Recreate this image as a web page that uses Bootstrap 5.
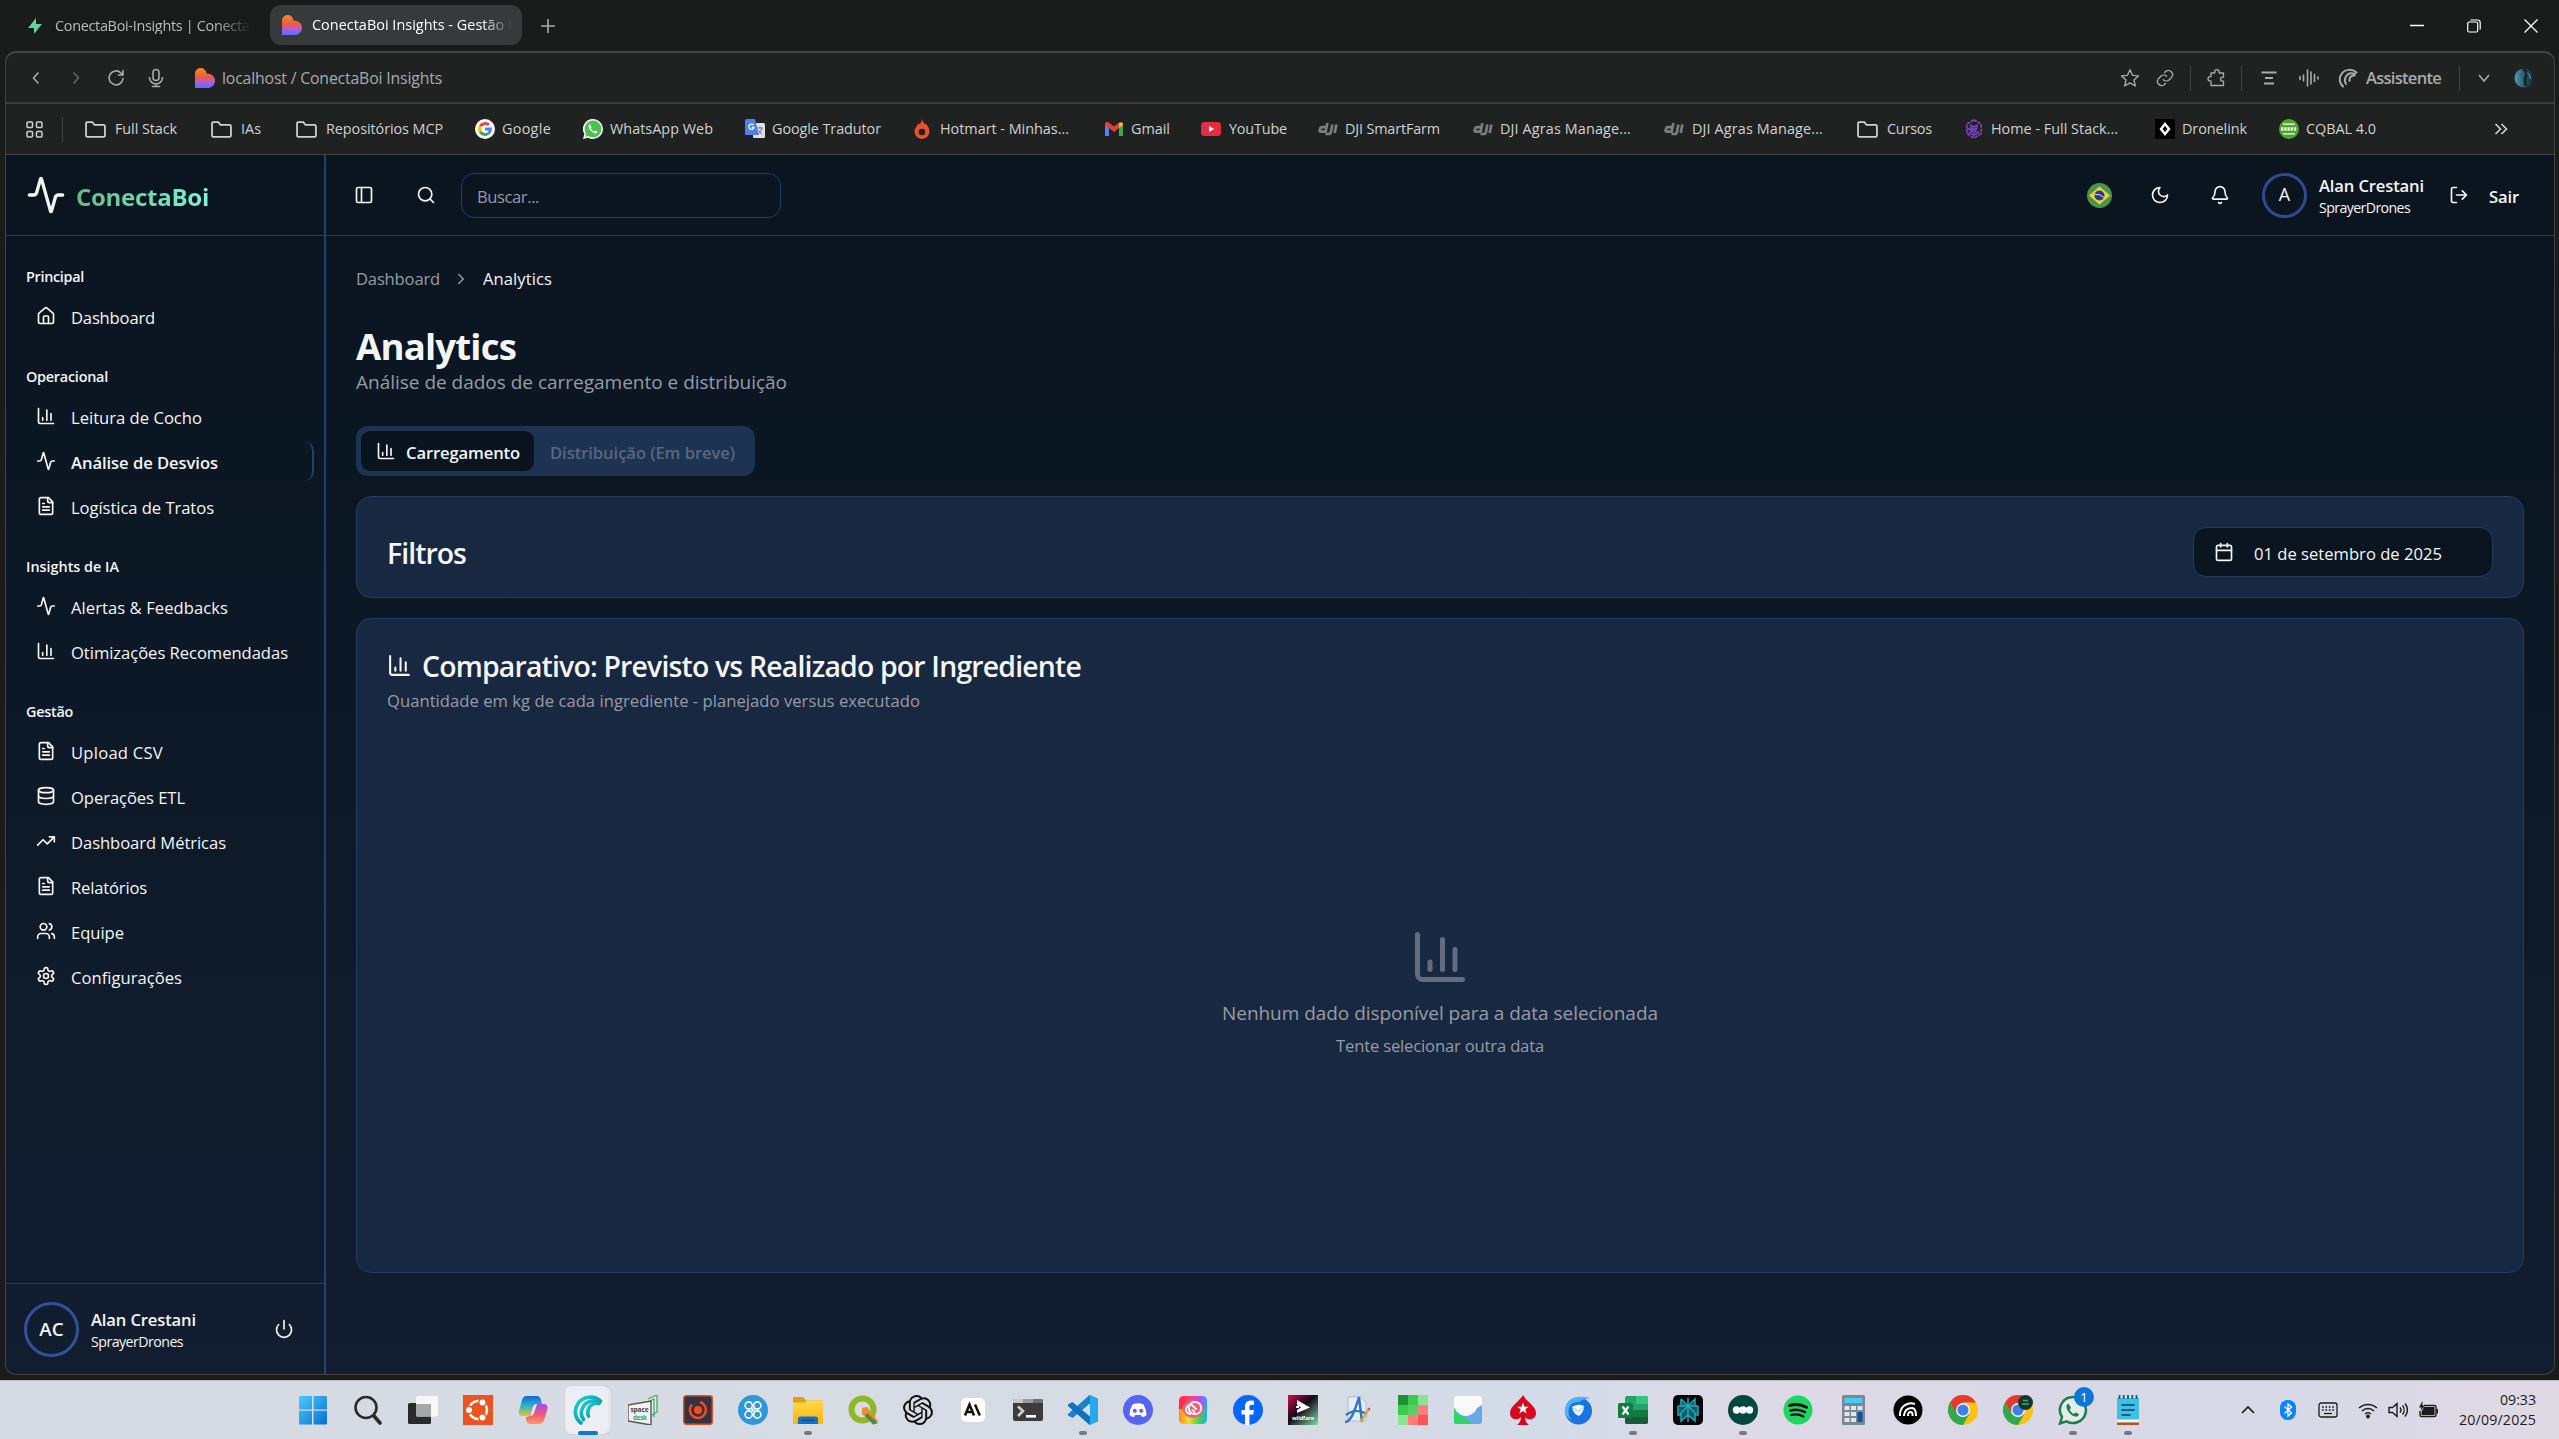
<!DOCTYPE html>
<html lang="pt-BR">
<head>
<meta charset="utf-8">
<meta name="viewport" content="width=device-width, initial-scale=1">
<title>ConectaBoi Insights</title>
<link href="https://cdn.jsdelivr.net/npm/bootstrap@5.3.0/dist/css/bootstrap.min.css" rel="stylesheet">
<style>
:root{--line:#233c66;--fg:#f3f5f7;--muted:#969ca6;--cardbg:#192841}
html,body{height:100%;overflow:hidden}
body{background:#1a1c1b;color:var(--fg);font-family:"Open Sans","Noto Sans",sans-serif;font-size:16.5px;line-height:1.2}
svg{display:block;flex:none}
.lu{fill:none;stroke:currentColor;stroke-width:2;stroke-linecap:round;stroke-linejoin:round;width:20px;height:20px}
.thin{stroke-width:1.6}
.t{display:inline-block;white-space:nowrap;flex:none}
a{color:inherit;text-decoration:none}
.t14{font-size:16.6px}.t12{font-size:14.2px}.sb{font-weight:600}
.screen{height:1439px;width:2559px}
.tabstrip{height:51px;color:#b9bbba;font-size:14.4px}
.tab-idle{width:270px;padding-left:26px;gap:11px}
.tab-idle .clip{width:196px;overflow:hidden;-webkit-mask-image:linear-gradient(90deg,#000 82%,transparent)}
.tab-on{width:252px;height:40px;margin-top:5px;align-self:flex-start;border-radius:11px;background:#373a3b;color:#fff;padding-left:12px;gap:10px}
.tab-on .clip{width:200px;overflow:hidden;-webkit-mask-image:linear-gradient(90deg,#000 85%,transparent)}
.winbtns{padding-right:21px;gap:43px;color:#fff}
.frame{margin:0 4px 0 5px;height:1324px;border:1px solid #414443;border-top-width:2px;border-radius:11px;overflow:hidden;background:#202221}
.toolbar{height:49px;border:0;color:#a9abaa;padding-top:1px}
.toolbar .nav-ic{padding-left:20px;gap:20px}
.addr{font-size:15.8px;margin-left:6px}
.toolright{padding-right:20px}
.vsep{width:1px;height:25px;background:#414443}
.bookbar{height:53px;border-top:2px solid #3a3d3c;border-bottom:1px solid #414443;color:#cfd1d0;font-size:14.4px}
.app{height:1219px;background:linear-gradient(180deg,#0b1520 0,#0c1724 30%,#121e30 100%)}
.side{width:320px;border-right:2px solid #23406f}
.brand{height:81px;border-bottom:1px solid var(--line);padding-left:20px;gap:10px}
.brandname{font-weight:700;font-size:24px;background:linear-gradient(90deg,#66b987,#7bf6d8);-webkit-background-clip:text;background-clip:text;color:transparent;padding-top:4px}
.sidegroup{padding:0 10px;margin-top:20px}
.sidelabel{height:40px;padding:2px 0 0 10px;font-weight:600;font-size:14.4px}
.sideitem{height:40px;padding-left:20px;gap:15px;margin-bottom:5px;border-radius:10px;color:#f3f5f7}
.sideitem:last-child{margin-bottom:0}
.sideitem .t{padding-top:3px}
.sideitem.on{font-weight:600;border-right:2px solid #23406f}
.sidefoot{height:91px;border-top:1px solid var(--line);padding:0 30px 0 18px}
.ava{border:3px solid #35509a;border-radius:50%}
.ava-lg{width:55px;height:55px;font-size:18.8px}
.ava-sm{width:45px;height:45px;margin:0 12px 0 32px;font-size:18px;border-color:#31498f}
.who{gap:3px;padding-top:2px}
.hdr{height:81px;border-bottom:1px solid var(--line);background:#0b1520;padding:0 35px 0 28px}
.search{width:320px;height:45px;border:1px solid var(--line);border-radius:13px;color:#949ba6;padding-left:15px}
.content{padding:0 30px}
.muted{color:var(--muted)}
.crumb{height:22px;margin-top:32px;font-size:16.6px;gap:12px}
h1.pg{font-size:36.6px;font-weight:700;margin:31px 0 0;line-height:50px}
.sub{font-size:19px;line-height:28px;margin-top:-3px}
.seg{width:399px;height:50px;background:#1e3252;border-radius:12px;padding:5px;margin-top:30px}
.seg-on{width:173px;height:40px;background:#0a141f;border-radius:9px;padding-left:15px;gap:10px}
.seg-off{margin-left:16px;color:#586680}
.panel{background:var(--cardbg);border:1px solid var(--line);border-radius:15px;margin-top:20px}
.p1{height:102px;padding:30px 30px 0}
.p2{height:655px;padding:29px 30px}
.h24{font-size:28.4px;font-weight:600}
.datebtn{width:300px;height:50px;background:#0b1520;border:1px solid var(--line);border-radius:13px;padding-left:20px;gap:20px;color:#f3f5f7}
.bar{margin-top:5px;height:59px;background:linear-gradient(90deg,#d6dae3 0,#d7dbe3 50%,#d3dbe8 60%,#ddd9e6 68%,#d8d8e6 90%,#e0d9e4 100%);border-top:1px solid #b9bac0;padding-left:285px;color:#1b1b1b}
.slot{width:55px;height:58px;position:relative;display:flex;align-items:center;justify-content:center}
.slot svg{width:30px;height:30px;z-index:1}
.slot.run::after{content:"";position:absolute;bottom:4px;width:8px;height:4px;border-radius:2px;background:#77797d}
.slot.act::after{content:"";position:absolute;bottom:4px;width:20px;height:4px;border-radius:2px;background:#0a78d4}
.slot.act::before{content:"";position:absolute;left:5px;top:5px;width:43px;height:48px;border-radius:6px;background:#eceef3;box-shadow:4px 0 0 -1px #e4e6ec,4px 0 0 0 #cbced6,0 0 0 1px #d0d3da}
.tray{padding-right:23px}
.clock{margin-left:21px;gap:2px;padding-bottom:1px}
.cnt{position:absolute;z-index:2;left:29px;top:6px;width:20px;height:20px;border-radius:50%;background:#0a78d4;color:#fff;font-size:13px;line-height:20px;text-align:center}
</style>
<script src="https://cdn.jsdelivr.net/npm/bootstrap@5.3.0/dist/js/bootstrap.bundle.min.js"></script>
</head>
<body>
<svg width="0" height="0" class="position-absolute">
<defs>
<linearGradient id="gh" x1="0" y1="0" x2="0" y2="1"><stop offset="0" stop-color="#f08a2c"/><stop offset=".45" stop-color="#ee5b3c"/><stop offset=".7" stop-color="#b45cd8"/><stop offset="1" stop-color="#4b73ff"/></linearGradient>
<linearGradient id="gw" x1="0" y1="0" x2="1" y2="1"><stop offset="0" stop-color="#4cc9fb"/><stop offset="1" stop-color="#0670d0"/></linearGradient>
<linearGradient id="gcm" x1="0" y1="0" x2="1" y2="1"><stop offset="0" stop-color="#19d3d6"/><stop offset="1" stop-color="#0a7f96"/></linearGradient>
<linearGradient id="gc1" x1="0" y1="0" x2="0" y2="1"><stop offset="0" stop-color="#1565d8"/><stop offset=".5" stop-color="#2db5c8"/><stop offset="1" stop-color="#e6c52a"/></linearGradient>
<linearGradient id="gc2" x1="0" y1="0" x2="0" y2="1"><stop offset="0" stop-color="#a64df0"/><stop offset=".5" stop-color="#f0567a"/><stop offset="1" stop-color="#ff9a62"/></linearGradient>
<linearGradient id="gcc" x1="0" y1="0" x2="1" y2="0"><stop offset="0" stop-color="#ff2d2d"/><stop offset=".45" stop-color="#ff3d8a"/><stop offset=".75" stop-color="#c04bf0"/><stop offset="1" stop-color="#2f9bff"/></linearGradient>
<linearGradient id="gcd" x1="0" y1="0" x2="1" y2="0"><stop offset="0" stop-color="#ff8a1e"/><stop offset=".35" stop-color="#f5dc22"/><stop offset=".7" stop-color="#4bcf4e"/><stop offset="1" stop-color="#20b6d8"/></linearGradient>
<linearGradient id="gap" x1="0" y1="0" x2="1" y2="1"><stop offset="0" stop-color="#d01050"/><stop offset=".45" stop-color="#150814"/><stop offset="1" stop-color="#7fe0a8"/></linearGradient>
<linearGradient id="gfo" x1="0" y1="0" x2="0" y2="1"><stop offset="0" stop-color="#ffd94f"/><stop offset="1" stop-color="#fbb40e"/></linearGradient>
<linearGradient id="gball" x1="0" y1="0" x2="1" y2="0"><stop offset="0" stop-color="#4f9db5"/><stop offset=".45" stop-color="#2f5f73"/><stop offset="1" stop-color="#16262f"/></linearGradient>
</defs>
<symbol id="activity" viewBox="0 0 24 24"><path d="M22 12h-2.48a2 2 0 0 0-1.93 1.46l-2.35 8.36a.25.25 0 0 1-.48 0L9.24 2.18a.25.25 0 0 0-.48 0l-2.35 8.36A2 2 0 0 1 4.49 12H2"/></symbol>
<symbol id="house" viewBox="0 0 24 24"><path d="M15 21v-8a1 1 0 0 0-1-1h-4a1 1 0 0 0-1 1v8"/><path d="M3 10a2 2 0 0 1 .709-1.528l7-5.999a2 2 0 0 1 2.582 0l7 5.999A2 2 0 0 1 21 10v9a2 2 0 0 1-2 2H5a2 2 0 0 1-2-2z"/></symbol>
<symbol id="chart" viewBox="0 0 24 24"><path d="M3 3v16a2 2 0 0 0 2 2h16M18 17V9M13 17V5M8 17v-3"/></symbol>
<symbol id="file" viewBox="0 0 24 24"><path d="M15 2H6a2 2 0 0 0-2 2v16a2 2 0 0 0 2 2h12a2 2 0 0 0 2-2V7Z"/><path d="M14 2v4a2 2 0 0 0 2 2h4M10 9H8M16 13H8M16 17H8"/></symbol>
<symbol id="database" viewBox="0 0 24 24"><ellipse cx="12" cy="5" rx="9" ry="3"/><path d="M3 5v14a9 3 0 0 0 18 0V5"/><path d="M3 12a9 3 0 0 0 18 0"/></symbol>
<symbol id="trend" viewBox="0 0 24 24"><path d="m22 7-8.500 8.500-5-5L2 17M16 7h6v6"/></symbol>
<symbol id="users" viewBox="0 0 24 24"><path d="M16 21v-2a4 4 0 0 0-4-4H6a4 4 0 0 0-4 4v2"/><circle cx="9" cy="7" r="4"/><path d="M22 21v-2a4 4 0 0 0-3-3.870M16 3.130a4 4 0 0 1 0 7.750"/></symbol>
<symbol id="gear" viewBox="0 0 24 24"><path d="M12.220 2h-.44a2 2 0 0 0-2 2v.18a2 2 0 0 1-1 1.730l-.43.25a2 2 0 0 1-2 0l-.15-.08a2 2 0 0 0-2.730.73l-.22.38a2 2 0 0 0 .73 2.730l.15.1a2 2 0 0 1 1 1.720v.51a2 2 0 0 1-1 1.740l-.15.09a2 2 0 0 0-.73 2.730l.22.38a2 2 0 0 0 2.730.73l.15-.08a2 2 0 0 1 2 0l.43.25a2 2 0 0 1 1 1.730V20a2 2 0 0 0 2 2h.44a2 2 0 0 0 2-2v-.18a2 2 0 0 1 1-1.730l.43-.25a2 2 0 0 1 2 0l.15.08a2 2 0 0 0 2.730-.73l.22-.39a2 2 0 0 0-.73-2.730l-.15-.08a2 2 0 0 1-1-1.740v-.5a2 2 0 0 1 1-1.740l.15-.09a2 2 0 0 0 .73-2.730l-.22-.38a2 2 0 0 0-2.730-.73l-.15.08a2 2 0 0 1-2 0l-.43-.25a2 2 0 0 1-1-1.730V4a2 2 0 0 0-2-2z"/><circle cx="12" cy="12" r="3"/></symbol>
<symbol id="power" viewBox="0 0 24 24"><path d="M12 2v10M18.400 6.600a9 9 0 1 1-12.770.04"/></symbol>
<symbol id="panel" viewBox="0 0 24 24"><rect x="3" y="3" width="18" height="18" rx="2"/><path d="M9 3v18"/></symbol>
<symbol id="search" viewBox="0 0 24 24"><circle cx="11" cy="11" r="8"/><path d="m21 21-4.300-4.300"/></symbol>
<symbol id="moon" viewBox="0 0 24 24"><path d="M12 3a6 6 0 0 0 9 9 9 9 0 1 1-9-9Z"/></symbol>
<symbol id="bell" viewBox="0 0 24 24"><path d="M10.268 21a2 2 0 0 0 3.464 0M3.262 15.326A1 1 0 0 0 4 17h16a1 1 0 0 0 .74-1.673C19.410 13.956 18 12.499 18 8A6 6 0 0 0 6 8c0 4.499-1.411 5.956-2.738 7.326"/></symbol>
<symbol id="logout" viewBox="0 0 24 24"><path d="m16 17 5-5-5-5M21 12H9M9 21H5a2 2 0 0 1-2-2V5a2 2 0 0 1 2-2h4"/></symbol>
<symbol id="calendar" viewBox="0 0 24 24"><path d="M8 2v4M16 2v4M3 10h18"/><rect x="3" y="4" width="18" height="18" rx="2"/></symbol>
<symbol id="chevR" viewBox="0 0 24 24"><path d="m9 18 6-6-6-6"/></symbol>
<symbol id="heart" viewBox="0 0 20 20"><path d="M0 5.500C0 2.500 2.500 0 5.700 0s5.800 2.500 5.800 5.500c5 0 8.500 3 8.500 7.200S16.500 20 12.500 20H0Z" fill="url(#gh)"/></symbol>
<symbol id="folder" viewBox="0 0 20 16"><path d="M1 14V2.300Q1 1 2.300 1H7l2 2.500h8.700Q19 3.500 19 4.800V13.700Q19 15 17.700 15H2.300Q1 15 1 14Z" fill="none" stroke="#cfd1d0" stroke-width="1.700"/></symbol>
<symbol id="google" viewBox="0 0 20 20"><circle cx="10" cy="10" r="10" fill="#fff"/><g fill="none" stroke-width="2.800"><path d="M13.900 6.100A5.500 5.500 0 0 0 5.200 7.300" stroke="#ea4335"/><path d="M5.200 7.300a5.500 5.500 0 0 0 0 5.400" stroke="#fbbc05"/><path d="M5.200 12.700a5.500 5.500 0 0 0 8.400 1.500" stroke="#34a853"/><path d="M13.600 14.200A5.500 5.500 0 0 0 15.500 10H10" stroke="#4285f4"/></g></symbol>
<symbol id="wa" viewBox="0 0 20 20"><path d="M10 0a10 10 0 0 1 0 20 10 10 0 0 1-5-1.300L0 20l1.400-4.900A10 10 0 0 1 10 0Z" fill="#fff"/><path d="M10 1.500a8.500 8.500 0 0 1 0 17 8.500 8.500 0 0 1-4.600-1.400L2.200 18l.9-3.200A8.500 8.500 0 0 1 10 1.500Z" fill="#4fc052"/><path d="M7 5.200c-1 .3-1.600 1.300-1.300 2.600.6 3 3 5.600 6 6.500 1.300.4 2.500-.2 2.800-1.500l-2.300-1.200-1 1.100C9.500 12 8.300 10.700 7.700 9.300l.9-.9Z" fill="#fff"/></symbol>
<symbol id="trans" viewBox="0 0 20 20"><rect x="8" y="4" width="12" height="15" rx="1.500" fill="#dfe1e5"/><path d="M12 9h6M15 7.500V9M17 9c-.5 3-2 4.500-4.500 6M13.500 11l3.500 4.500" stroke="#6f7780" fill="none"/><path d="M1.500 0H10l4 16H1.500Q0 16 0 14.500v-13Q0 0 1.500 0Z" fill="#4f7fea"/><path d="M8.500 6.200A2.600 2.600 0 1 0 9 8.300H6.800" fill="none" stroke="#fff" stroke-width="1.300"/></symbol>
<symbol id="hot" viewBox="0 0 20 20"><path d="M10 0c.5 3 2 3.500 3 5.500l.8-1c2 2.500 3.700 5.500 3.700 8A7.400 7.400 0 0 1 10 20a7.400 7.400 0 0 1-7.500-7.500C2.500 9 5.500 7.500 6.500 4l1 1.500C9 4 9.700 2 10 0Z" fill="#e8522c"/><circle cx="10" cy="13" r="3.300" fill="#202221"/></symbol>
<symbol id="gmail" viewBox="0 0 20 20"><path d="M1 17V5l4 3v9Z" fill="#4b86ee"/><path d="M15 17V8l4-3v12Z" fill="#3da853"/><path d="M1 5c0-2 2-3 3.500-1.800L10 7.500l5-3.800V9l-5 4-5-4-4-3Z" fill="#e34133"/><path d="M15 4c1.500-1.500 4-.5 4 1.200V6l-4 3Z" fill="#f5bb2b"/></symbol>
<symbol id="yt" viewBox="0 0 20 20"><rect y="3" width="20" height="14" rx="3.500" fill="#e52d41"/><path d="M8 7v6l5-3Z" fill="#fff"/></symbol>
<symbol id="dji" viewBox="0 0 20 20"><g fill="none" stroke="#7c7e7d" stroke-width="2.700"><path d="M9.400 4 7.600 12.600H2.800Q1.300 12.600 1.700 11L2.200 9.500Q2.600 8.200 4 8.200H8.500"/><path d="M14.400 5.500 12.900 13Q12.500 15 10.800 15H7.500M18.400 5.500 16.700 14"/></g></symbol>
<symbol id="cube" viewBox="0 0 20 20"><g fill="none" stroke="#7f45cf" stroke-width="1.600"><path d="M10 1 2.800 5v9.500L10 19l7.200-4.500V5Z" stroke-dasharray="3.500 1"/><path d="M6 6l4 2 4-2M3 9l7 4 3-1.600M14 8.500l-4 2-4-2M5 13l5 3 5-3"/></g></symbol>
<symbol id="dlink" viewBox="0 0 20 20"><rect width="20" height="20" fill="#000"/><path d="M10 5 6 10l4 5 4-5Z" fill="none" stroke="#fff" stroke-width="2.400"/></symbol>
<symbol id="cq" viewBox="0 0 20 20"><circle cx="10" cy="10" r="10" fill="#4fa32c"/><path d="M4 5.200h12M4 14.800h12" stroke="#fff" stroke-width="1.300"/><path d="M2 10h16" stroke="#e6f3df" stroke-width="3.400" stroke-dasharray="2.400 .8"/></symbol>
<!-- taskbar -->
<symbol id="k-win" viewBox="0 0 30 30"><path d="M1 2q0-1 1-1h12v13.500H1ZM15.500 1h12.500q1 0 1 1v12.500H15.500ZM1 15.800h13V29.500H2q-1 0-1-1ZM15.500 15.800H29v12.700q0 1-1 1H15.500Z" fill="url(#gw)"/></symbol>
<symbol id="k-search" viewBox="0 0 30 30"><circle cx="13" cy="12.500" r="10.500" fill="none" stroke="#2b2b2b" stroke-width="2.600"/><path d="m21 21 6 7" stroke="#2b2b2b" stroke-width="3.600" stroke-linecap="round"/></symbol>
<symbol id="k-task" viewBox="0 0 30 30"><rect y="8" width="23" height="21" rx="1.500" fill="#2a2a2a"/><rect x="8" y="1" width="22" height="20.500" rx="1.500" fill="#f7f7f7"/><path d="M8 9h15v12.500H9.500Q8 21.500 8 20Z" fill="#a5a7a9"/></symbol>
<symbol id="k-ubuntu" viewBox="0 0 30 30"><rect width="30" height="30" fill="#e95420"/><circle cx="15" cy="15" r="9" fill="none" stroke="#fff" stroke-width="2.500"/><g fill="#fff" stroke="#e95420" stroke-width="1.500"><circle cx="6" cy="15" r="3.700"/><circle cx="19.500" cy="7.500" r="3.700"/><circle cx="19.500" cy="22.500" r="3.700"/></g></symbol>
<symbol id="k-copilot" viewBox="0 0 30 30"><path d="M9 1h10q3 0 4 4l1 4h-5q-3 0-4 3l-2.500 7Q11.500 21 8 21H4Q0 21 1 16L4 5Q5 1 9 1Z" fill="url(#gc1)"/><path d="M21 29H12q-3 0-4-4v-3q3 0 4-3l3-7q1-3 5-3h6q4 0 3.500 5L26 25q-1 4-5 4Z" fill="url(#gc2)"/><path d="M15 12q1-3 4-3l-3 9q-1 3-4 3Z" fill="#e8e4f2"/></symbol>
<symbol id="k-comet" viewBox="0 0 30 30"><g fill="none" stroke="url(#gcm)" stroke-width="3.600" stroke-linecap="round"><path d="M27.500 6C21 0 10 1 5 8.500S2.500 24 8 28"/><path d="M26.500 7.500C20 4 13 6.500 10 12s-2 9 .5 12.500"/><path d="M26 8.500c-5-1-9 1.500-10.500 5.500s-1 5.500 0 7"/></g></symbol>
<symbol id="k-beat" viewBox="0 0 30 30"><rect x=".7" y=".7" width="28.600" height="28.600" rx="2.500" fill="#2f3542" stroke="#ef4b1f" stroke-width="1.400"/><path d="M17 7.200A8 8 0 1 1 9 9.500" fill="none" stroke="#ff471a" stroke-width="2.400"/><circle cx="15" cy="15" r="4" fill="#ff471a"/></symbol>
<symbol id="k-quad" viewBox="0 0 30 30"><circle cx="15" cy="15" r="15" fill="#2f98dc"/><g fill="none" stroke="#fff" stroke-width="1.600"><circle cx="10.700" cy="10.500" r="3.600"/><circle cx="19.300" cy="10.500" r="3.600"/><circle cx="10.700" cy="19.500" r="3.600"/><circle cx="19.300" cy="19.500" r="3.600"/><path d="M13 13l4 4M17 13l-4 4"/></g></symbol>
<symbol id="k-files" viewBox="0 0 30 30"><path d="M0 3.500Q0 2 1.500 2H10l3 3.500h15.500Q30 5.500 30 7v3H0Z" fill="#e09f0c"/><path d="M0 7.500h12L14 5.500H28.500Q30 5.500 30 7V27.500Q30 29 28.500 29H0Z" fill="url(#gfo)"/><path d="M5 29V24q0-2.500 2.500-2.500h15Q25 21.500 25 24v5Z" fill="#1271c6"/><path d="M9 25.300h12" stroke="#0a4c8e" stroke-width="1.500"/></symbol>
<symbol id="k-qgis" viewBox="0 0 30 30"><circle cx="14.500" cy="14.500" r="11" fill="none" stroke="#8fb828" stroke-width="6"/><path d="M14 13l5-1 11 14-4.500 3.500L14 19Z" fill="#f08a2c"/><path d="M19 18l11 10-5 1.500L17 21Z" fill="#4f8a35"/></symbol>
<symbol id="k-gpt" viewBox="0 0 24 24"><path fill="#111" d="M22.282 9.821a5.985 5.985 0 0 0-.516-4.911 6.046 6.046 0 0 0-6.510-2.900A6.065 6.065 0 0 0 4.981 4.182a5.985 5.985 0 0 0-3.998 2.900 6.046 6.046 0 0 0 .743 7.097 5.980 5.980 0 0 0 .511 4.911 6.051 6.051 0 0 0 6.515 2.900A5.985 5.985 0 0 0 13.260 24a6.056 6.056 0 0 0 5.772-4.206 5.990 5.990 0 0 0 3.998-2.900 6.056 6.056 0 0 0-.747-7.073zM13.260 22.430a4.476 4.476 0 0 1-2.876-1.041l.141-.080 4.779-2.758a.795.795 0 0 0 .393-.681v-6.737l2.020 1.169a.071.071 0 0 1 .038.052v5.583a4.504 4.504 0 0 1-4.495 4.494zM3.600 18.304a4.471 4.471 0 0 1-.535-3.014l.142.085 4.783 2.759a.771.771 0 0 0 .781 0l5.843-3.369v2.332a.080.080 0 0 1-.033.062L9.740 19.950a4.499 4.499 0 0 1-6.140-1.646zM2.341 7.896a4.485 4.485 0 0 1 2.366-1.973V11.600a.766.766 0 0 0 .388.677l5.815 3.354-2.020 1.169a.076.076 0 0 1-.071 0l-4.830-2.787A4.504 4.504 0 0 1 2.341 7.872zm16.597 3.855-5.833-3.387L15.119 7.200a.076.076 0 0 1 .071 0l4.830 2.791a4.494 4.494 0 0 1-.676 8.105v-5.678a.790.790 0 0 0-.407-.667zm2.010-3.023-.141-.085-4.774-2.782a.776.776 0 0 0-.785 0L9.409 9.230V6.897a.066.066 0 0 1 .028-.061l4.830-2.787a4.499 4.499 0 0 1 6.680 4.660zM8.307 12.863l-2.020-1.164a.080.080 0 0 1-.038-.057V6.074a4.499 4.499 0 0 1 7.376-3.453l-.142.080L8.704 5.459a.795.795 0 0 0-.393.681zm1.097-2.365 2.602-1.500 2.607 1.500v2.999l-2.597 1.500-2.607-1.500z"/></symbol>
<symbol id="k-ai" viewBox="0 0 30 30"><rect x="3" y="3" width="24" height="24" rx="5" fill="#fff"/><path d="m7 20.500 4.500-11 4.500 11M8.800 17h5.500M17 9.500l4.800 11" fill="none" stroke="#111" stroke-width="2.500"/></symbol>
<symbol id="k-term" viewBox="0 0 30 30"><rect y="4" width="30" height="22" rx="2" fill="#3b3b3b"/><path d="M0 8V5.500Q0 4 1.500 4H10v4Z" fill="#c9c9c9"/><path d="M10 4h10v4H10Z" fill="#9b9b9b"/><path d="M20 4h8.500Q30 4 30 5.500V8H20Z" fill="#6f6f6f"/><path d="m5 11.500 5 4.500-5 5" fill="none" stroke="#d0d0d0" stroke-width="2.600"/><rect x="13" y="20" width="10" height="2.600" fill="#fff"/></symbol>
<symbol id="k-vs" viewBox="0 0 30 30"><path d="M22 0l8 3.500v23L22 30V0Z" fill="#25a8ee"/><path d="M22 0v8.500L4.500 23 0 20.500v-1.500L21 .5Z" fill="#1b83cc"/><path d="M22 30v-8.500L4.500 7 0 9.500V11l21 18.500Z" fill="#0f72bd"/></symbol>
<symbol id="k-disc" viewBox="0 0 30 30"><circle cx="15" cy="15" r="15" fill="#5865f2"/><path d="M9.500 9.500q5.500-2.300 11 0 3 5 3 10.500-2 1.800-4.500 2l-1.200-2h-5.600L11 22q-2.500-.2-4.500-2 0-5.500 3-10.500Z" fill="#fff"/><circle cx="11.800" cy="15.800" r="2" fill="#5865f2"/><circle cx="18.200" cy="15.800" r="2" fill="#5865f2"/></symbol>
<symbol id="k-cc" viewBox="0 0 30 30"><path d="M1 16V6q0-5 5-5h18q5 0 5 5v10Z" fill="url(#gcc)"/><path d="M1 14h28v10q0 5-5 5H6q-5 0-5-5Z" fill="url(#gcd)"/><ellipse cx="15" cy="14" rx="10.500" ry="9" fill="#f0607c"/><g fill="none" stroke="#fff" stroke-width="1.800"><circle cx="17" cy="13" r="6.200"/><path d="M13 19a4.500 4.500 0 1 1 1.500-8.500l4 4M14 14.500l3 3.200"/></g></symbol>
<symbol id="k-fb" viewBox="0 0 30 30"><circle cx="15" cy="15" r="15" fill="#0866ff"/><path d="M12 30V19.500H8.500V15H12v-3c0-4.500 2.500-6.500 6-6.500l3 .3v4h-2c-2 0-2.600.8-2.600 2.400V15H21l-.7 4.500h-3.900V30Z" fill="#fff"/></symbol>
<symbol id="k-draft" viewBox="0 0 30 30"><path d="M5 2h13l5 6v18H5Z" fill="#e4eef8" stroke="#a9bfd4"/><path d="M2 27c5 0 9-8 14-25l3 25M3 20c6-5 14-5 21-1" fill="none" stroke="#2f73c4" stroke-width="2.400"/><path d="M18 27l7-12" stroke="#e8a72c" stroke-width="2.400"/><circle cx="26" cy="14" r="1.500" fill="#d55"/></symbol>
<symbol id="k-pix" viewBox="0 0 30 30"><path fill="#87e68f" d="M0 0h30v30H0Z"/><path fill="#1f9131" d="M0 0h10v10H0Z"/><path fill="#3ec951" d="M10 0h10v10H10ZM0 10h10v10H0Z"/><path fill="#57cf62" d="M10 10h10v10H10Z"/><path fill="#ff7d7d" d="M20 10h10v10H20ZM10 20h10v10H10Z"/><path fill="#ff5454" d="M20 20h10v10H20Z"/></symbol>
<symbol id="k-map" viewBox="0 0 30 30"><rect x="1" y="1" width="28" height="28" rx="2.500" fill="#f7f9fa"/><path d="M1 13q6 9 13 8 8-2 10-8l5-3v16.500Q29 29 26.500 29H3.500Q1 29 1 26.500Z" fill="#6aa8e8"/><path d="M1 13q5 8 9 9t9 7H3.500Q1 29 1 26.500Z" fill="#2fd565"/></symbol>
<symbol id="k-poker" viewBox="0 0 30 30"><path d="M15 0c3 6 13 11 13 18 0 7-8 8-11 4 0 3 1 6 4 8H9c3-2 4-5 4-8-3 4-11 3-11-4C2 11 12 6 15 0Z" fill="#d8091f"/><path d="m15 7.500 1.400 4.200h4.400l-3.500 2.600 1.300 4.200L15 16l-3.600 2.500 1.300-4.200-3.500-2.600h4.400Z" fill="#fff"/></symbol>
<symbol id="k-bird" viewBox="0 0 30 30"><circle cx="15.500" cy="16" r="13.500" fill="#1a73e0"/><path d="M2 13Q5 2 16 2q8-1 11 2-7-1-10 3Q8 6 6 13q-2 7 3 12-9-4-7-12Z" fill="#4fb0ff"/><path d="M9 12q6-4 12-1 0 6-5 10Q10 19 9 12Z" fill="#f1f7ff"/><path d="M9 12l7 5 5-6" fill="none" stroke="#b4d3f5" stroke-width="1.200"/></symbol>
<symbol id="k-xl" viewBox="0 0 30 30"><rect x="7" y="1" width="23" height="28" rx="2" fill="#21a366"/><path d="M18 1h10q2 0 2 2v6H18Z" fill="#33c481"/><path d="M7 15h23v7H7Z" fill="#107c41"/><path d="M7 22h23v5q0 2-2 2H9q-2 0-2-2Z" fill="#185c37"/><rect y="8" width="15" height="15" rx="1.500" fill="#107c41"/><path d="m4.500 11.500 6 8M10.500 11.500l-6 8" stroke="#fff" stroke-width="2.200"/></symbol>
<symbol id="k-perp" viewBox="0 0 30 30"><rect width="30" height="30" rx="5" fill="#06090b"/><path d="M8 4l7 7 7-7v7h3v9h-3v6l-7-6-7 6v-6H5v-9h3Z" fill="#0f5f6b"/><g fill="none" stroke="#22a7b8" stroke-width="1.500"><path d="M15 3v24M8 4l7 7 7-7v7M8 4v7M5 11h20M5 11v9h3M25 11v9h-3M15 11l-7 7v8l7-6M15 11l7 7v8l-7-6"/></g></symbol>
<symbol id="k-dots" viewBox="0 0 30 30"><circle cx="15" cy="15" r="15" fill="#04473c"/><g fill="#fff"><circle cx="8.500" cy="15" r="3.700"/><circle cx="15" cy="15" r="3.700"/><circle cx="21.500" cy="15" r="3.700"/></g></symbol>
<symbol id="k-spot" viewBox="0 0 30 30"><circle cx="15" cy="15" r="14.500" fill="#1ed760"/><g fill="none" stroke="#111" stroke-linecap="round"><path d="M6.500 10.500q9-2.500 17 1.800" stroke-width="3"/><path d="M7.500 15.500q8-2 14.500 1.700" stroke-width="2.500"/><path d="M8 20q7-1.700 12.500 1.500" stroke-width="2.100"/></g></symbol>
<symbol id="k-calc" viewBox="0 0 30 30"><rect x="4" width="23" height="30" rx="1.500" fill="#7b8794"/><rect x="6.500" y="3" width="18" height="5" fill="#46cdf5"/><g fill="#dfe5ea"><path d="M6.500 11h5v4h-5zM13 11h5v4h-5zM19.500 11h5v4h-5zM6.500 17h5v4h-5zM13 17h5v4h-5zM6.500 23h5v4h-5zM13 23h5v4h-5z"/></g><path d="M19.500 17h5v10h-5z" fill="#15509c"/></symbol>
<symbol id="k-arc" viewBox="0 0 30 30"><circle cx="15" cy="15" r="14.500" fill="#000"/><g fill="none" stroke="#fff" stroke-width="2"><path d="M7 21v-2A11 11 0 0 1 22 9M11 21v-1q1-7 8-7 4 0 4 8M15 21q0-4 2.500-4t2 4"/></g></symbol>
<symbol id="k-chrome" viewBox="0 0 30 30"><circle cx="15" cy="15" r="15" fill="#fbc116"/><path d="M2 7.500A15 15 0 0 1 28 7.500H15L8.500 19Z" fill="#e33b2e"/><path d="M2 7.500A15 15 0 0 0 15 30l6.500-11.300L8.500 18.800Z" fill="#2da94f"/><circle cx="15" cy="15" r="7" fill="#fff"/><circle cx="15" cy="15" r="5.600" fill="#3f7de8"/></symbol>
<symbol id="k-chrome2" viewBox="0 0 30 30"><use href="#k-chrome"/><circle cx="22.500" cy="7.500" r="7.500" fill="#12372c"/><path d="M19 9h7M20 5.500h5" stroke="#58a06b" stroke-width="1.500"/></symbol>
<symbol id="k-wa" viewBox="0 0 30 30"><path d="M15 2a13 13 0 1 1-6.500 24.300L2 28.500 4 22A13 13 0 0 1 15 2Z" fill="#e4ece9" stroke="#1c7e4e" stroke-width="2.500"/><path d="M10.500 8.500c-1.800.7-2.300 2.300-1.900 4 .8 4 4.300 7.800 8.300 9 2 .6 3.700-.5 4.100-2.300l-3.500-2-1.500 1.700c-2-.9-3.500-2.500-4.400-4.500l1.400-1.500Z" fill="#1c7e4e"/></symbol>
<symbol id="k-note" viewBox="0 0 30 30"><path d="M4 3h22v22H4Z" fill="#3fc1e6"/><path d="M4 24.500h22V27H4Z" fill="#f4f4f4"/><path d="M4 27.500h22V30H4Z" fill="#b4541c"/><path d="M8.500 10h13M8.500 15h13M8.500 20h9" stroke="#0f5f87" stroke-width="1.800"/><path d="M6.500 0v4M10.700 0v4M15 0v4M19.300 0v4M23.500 0v4" stroke="#155f7e" stroke-width="1.800"/></symbol>
</svg>

<div class="screen d-flex flex-column">
  <div class="tabstrip d-flex align-items-center flex-shrink-0">
    <div class="tab-idle d-flex align-items-center">
      <svg width="18" height="18" viewBox="0 0 18 18"><path d="M10 1v6h6L8 17v-6H2Z" fill="#5fd39a"/></svg>
      <div class="clip"><span class="t" data-w="203">ConectaBoi-Insights | Conectab</span></div>
    </div>
    <div class="tab-on d-flex align-items-center">
      <svg width="20" height="20"><use href="#heart"/></svg>
      <div class="clip"><span class="t" data-w="200">ConectaBoi Insights - Gestão I</span></div>
    </div>
    <svg style="margin-left:18px" width="16" height="16" viewBox="0 0 16 16"><path d="M8 1v14M1 8h14" stroke="#a9abaa" stroke-width="1.600"/></svg>
    <div class="winbtns d-flex align-items-center ms-auto">
      <svg width="14" height="14"><path d="M0 6.500h14" stroke="#fff" stroke-width="1.500"/></svg>
      <svg width="14" height="14" viewBox="0 0 14 14" fill="none" stroke="#fff" stroke-width="1.200"><rect x=".7" y="3" width="10" height="10" rx="1.500"/><path d="M3.500 1h7q2.700 0 2.700 2.700V10.500"/></svg>
      <svg width="14" height="14"><path d="m.5.500 13 13m0-13-13 13" stroke="#fff" stroke-width="1.300"/></svg>
    </div>
  </div>

  <div class="frame flex-shrink-0">
    <div class="toolbar d-flex align-items-center">
      <div class="nav-ic d-flex align-items-center">
        <svg class="lu thin" viewBox="0 0 20 20"><path d="m12 5-4.500 5 4.500 5"/></svg>
        <svg class="lu thin opacity-50" viewBox="0 0 20 20"><path d="m8 5 4.500 5L8 15"/></svg>
        <svg class="lu thin" viewBox="0 0 20 20"><path d="M17 10.500A7 7 0 1 1 15 5l2 2M17 2.500V7h-4.500"/></svg>
        <svg class="lu thin" viewBox="0 0 20 20"><rect x="7" y="1.500" width="6" height="11" rx="3"/><path d="M3.500 9.500a6.500 6.500 0 0 0 13 0M10 16v2.500M6.500 18.500h7"/></svg>
      </div>
      <svg class="ms-4" width="26" height="20" viewBox="-4 0 24 20"><use href="#heart" width="20" height="20"/></svg>
      <span class="t addr" data-w="220">localhost / ConectaBoi Insights</span>
      <div class="toolright d-flex align-items-center ms-auto">
        <svg class="lu thin" viewBox="0 0 24 24"><path d="m12 2 3 6.800 7.200.7-5.400 4.900 1.600 7.200L12 17.900l-6.400 3.700 1.600-7.200-5.400-4.900 7.200-.7Z"/></svg>
        <svg class="lu thin" viewBox="0 0 24 24" style="margin:0 15px"><path d="M10 14a5 5 0 0 0 7 0l3-3a5 5 0 0 0-7-7l-1.500 1.500M14 10a5 5 0 0 0-7 0l-3 3a5 5 0 0 0 7 7l1.500-1.500"/></svg>
        <div class="vsep"></div>
        <svg class="lu thin" viewBox="0 0 24 24" style="margin:0 15px"><path d="M6 21V15.500H5a2.600 2.600 0 0 1 0-5.200H6V6h4.500V4.500a2.600 2.600 0 0 1 5.200 0V6H21v5h-1a2.400 2.400 0 0 0 0 4.800h1V21Z"/></svg>
        <div class="vsep"></div>
        <svg class="lu" viewBox="0 0 20 20" style="margin:0 20px 0 17px;stroke-linecap:butt"><path d="M2.500 4.500h15M6 10h8M5 15.500h10"/></svg>
        <svg class="lu thin" viewBox="0 0 20 20"><path d="M1 8.500v3M4.500 7v6M8.500 2v16M12 4v12M15.500 6.500v7M19 9v2"/></svg>
        <svg class="lu" viewBox="0 0 20 20" style="margin:0 8px 0 19px"><path d="M18.500 4.500C14 .5 7 1 3.500 6S2.500 16 5 18.500M17 6c-5-2-8 0-9.500 3.500S7 14.500 8 16M16.500 7.500c-3 0-4.500 1-5 3.500V13"/></svg>
        <span class="t sb" data-w="75">Assistente</span>
        <div class="vsep" style="margin:0 16px 0 18px"></div>
        <svg width="16" height="16" viewBox="0 0 16 16"><path d="m3 5 5 6 5-6" fill="none" stroke="#a9abaa" stroke-width="1.500"/></svg>
        <svg style="margin-left:22px" width="20" height="20" viewBox="0 0 20 20"><circle cx="10" cy="10" r="9.500" fill="url(#gball)"/><path d="M9 1q5 2 3 7-2 3 0 10" stroke="#14222b" stroke-width="2.600" fill="none"/><path d="M13 5q4 2 3 6" stroke="#4d91a8" stroke-width="1.300" fill="none"/></svg>
      </div>
    </div>

    <div class="bookbar d-flex align-items-center">
      <svg style="margin-left:20px" width="17" height="17" viewBox="0 0 17 17" fill="none" stroke="#cfd1d0" stroke-width="1.500"><rect x="1" y="1" width="5.500" height="5.500" rx="1"/><rect x="10.500" y="1" width="5.500" height="5.500" rx="1"/><rect x="1" y="10.500" width="5.500" height="5.500" rx="1"/><rect x="10.500" y="10.500" width="5.500" height="5.500" rx="1"/></svg>
      <div class="vsep" style="margin-left:19px"></div>
      <div id="bookmarks" class="d-flex align-items-center"></div>
      <svg class="ms-auto" style="margin-right:46px" width="14" height="14" viewBox="0 0 14 14"><path d="m1.500 2 5 5-5 5M7.500 2l5 5-5 5" fill="none" stroke="#cfd1d0" stroke-width="1.700"/></svg>
    </div>

    <div class="app d-flex">
      <aside class="side d-flex flex-column flex-shrink-0">
        <div class="brand d-flex align-items-center flex-shrink-0">
          <svg class="lu" style="width:40px;height:40px"><use href="#activity"/></svg>
          <span class="t brandname" data-w="133">ConectaBoi</span>
        </div>
        <nav id="menu"></nav>
        <div class="sidefoot d-flex align-items-center mt-auto">
          <div class="ava ava-lg d-flex align-items-center justify-content-center sb">AC</div>
          <div class="who d-flex flex-column" style="margin-left:12px">
            <span class="t sb t14" data-w="105">Alan Crestani</span>
            <span class="t t12" data-w="98">SprayerDrones</span>
          </div>
          <svg class="lu ms-auto"><use href="#power"/></svg>
        </div>
      </aside>

      <div class="flex-grow-1 d-flex flex-column">
        <header class="hdr d-flex align-items-center flex-shrink-0">
          <svg class="lu"><use href="#panel"/></svg>
          <svg class="lu" style="margin:0 25px 0 42px"><use href="#search"/></svg>
          <div class="search d-flex align-items-center"><span class="t t14 pt-1" data-w="62">Buscar...</span></div>
          <svg class="ms-auto" width="25" height="25" viewBox="0 0 25 25"><circle cx="12.500" cy="12.500" r="12.500" fill="#47964a"/><path d="M12.500 3.500 23 12.500l-10.500 9L2 12.500Z" fill="#f4cf3e"/><circle cx="12.500" cy="12.500" r="5" fill="#2c3a8c"/><path d="M8 11.500q5-1 9 3" stroke="#dfe6f0" fill="none"/></svg>
          <svg class="lu" style="margin:0 40px 0 38px"><use href="#moon"/></svg>
          <svg class="lu"><use href="#bell"/></svg>
          <div class="ava ava-sm d-flex align-items-center justify-content-center">A</div>
          <div class="who d-flex flex-column">
            <span class="t sb t14" data-w="105">Alan Crestani</span>
            <span class="t t12" data-w="97">SprayerDrones</span>
          </div>
          <svg class="lu" style="margin:0 20px 0 25px"><use href="#logout"/></svg>
          <span class="t sb t14 pt-1" data-w="30">Sair</span>
        </header>

        <main class="content">
          <div class="crumb d-flex align-items-center">
            <span class="t muted" data-w="84">Dashboard</span>
            <svg class="lu muted" style="width:18px;height:18px"><use href="#chevR"/></svg>
            <span class="t" style="margin-left:1px" data-w="69">Analytics</span>
          </div>
          <h1 class="pg"><span class="t" data-w="160">Analytics</span></h1>
          <div class="sub muted"><span class="t" data-w="431">Análise de dados de carregamento e distribuição</span></div>
          <div class="seg d-flex align-items-center">
            <div class="seg-on d-flex align-items-center">
              <svg class="lu"><use href="#chart"/></svg><span class="t sb t14 pt-1" data-w="114">Carregamento</span>
            </div>
            <span class="t sb t14 pt-1 seg-off" data-w="185">Distribuição (Em breve)</span>
          </div>
          <section class="panel p1 d-flex align-items-start justify-content-between">
            <span class="t h24" style="padding-top:9px" data-w="79">Filtros</span>
            <div class="datebtn d-flex align-items-center">
              <svg class="lu"><use href="#calendar"/></svg><span class="t t14 pt-1" data-w="188">01 de setembro de 2025</span>
            </div>
          </section>
          <section class="panel p2 d-flex flex-column">
            <div class="d-flex align-items-center" style="height:36px;gap:10px">
              <svg class="lu" style="width:25px;height:25px;margin-bottom:2px"><use href="#chart"/></svg>
              <span class="t h24" data-w="659">Comparativo: Previsto vs Realizado por Ingrediente</span>
            </div>
            <div class="muted" style="line-height:24px;margin-top:5px"><span class="t t14" data-w="533">Quantidade em kg de cada ingrediente - planejado versus executado</span></div>
            <div class="d-flex flex-column align-items-center muted" style="margin-top:214px">
              <svg class="lu" style="width:60px;height:60px;color:#626c80"><use href="#chart"/></svg>
              <span class="t" style="font-size:19px;margin-top:15px" data-w="436">Nenhum dado disponível para a data selecionada</span>
              <span class="t t14" style="margin-top:11px" data-w="208">Tente selecionar outra data</span>
            </div>
          </section>
        </main>
      </div>
    </div>
  </div>

  <footer class="bar d-flex align-items-center flex-shrink-0">
    <div id="tasks" class="d-flex"></div>
    <div class="tray d-flex align-items-center ms-auto">
      <svg width="14" height="14" viewBox="0 0 14 14"><path d="m1 10 6-6 6 6" fill="none" stroke="#1b1b1b" stroke-width="1.700"/></svg>
      <svg style="margin-left:25px" width="16" height="20" viewBox="0 0 16 20"><rect width="16" height="20" rx="7.500" fill="#0a84ff"/><path d="m4.500 6.500 7 6.500L8 16V4l3.500 3-7 6.500" fill="none" stroke="#fff" stroke-width="1.300"/></svg>
      <svg style="margin-left:22px" width="20" height="16" viewBox="0 0 20 16" fill="none" stroke="#1b1b1b" stroke-width="1.300"><rect x="1" y="1" width="18" height="14" rx="2"/><path d="M4 5h12M4 8h12" stroke-dasharray="1.700 1.700"/><path d="M6 11.500h8"/></svg>
      <svg style="margin-left:20px" width="20" height="18" viewBox="0 0 20 18" fill="none" stroke="#1b1b1b" stroke-width="1.500"><path d="M1 7a13 13 0 0 1 18 0M4 10a8.500 8.500 0 0 1 12 0M7 13a4.500 4.500 0 0 1 6 0"/><circle cx="10" cy="15.500" r="1.200" fill="#1b1b1b"/></svg>
      <svg style="margin-left:10px" width="20" height="18" viewBox="0 0 20 18" fill="none" stroke="#1b1b1b" stroke-width="1.400"><path d="M1 6.500v5h3.500L9 15.500v-13L4.500 6.500ZM12 6.500a4 4 0 0 1 0 5M14.500 4.500a7 7 0 0 1 0 9M17 2.500a10 10 0 0 1 0 13"/></svg>
      <svg style="margin-left:10px" width="20" height="18" viewBox="0 0 20 18"><path d="M6 4.500h10.500q1.500 0 1.500 1.500v8q0 1.500-1.500 1.500h-13Q2 15.500 2 14v-4" fill="none" stroke="#1b1b1b" stroke-width="1.400"/><path d="M6 6h10.500v8H3.500v-3Z" fill="#1b1b1b"/><path d="M18.500 8H20v4.500h-1.500Z" fill="#1b1b1b"/><path d="M4.500 0 1 6.500h2.500L2.500 10 7 4.500H4.500Z" fill="#1b1b1b"/></svg>
      <div class="clock d-flex flex-column align-items-end t12">
        <span class="t" data-w="36">09:33</span><span class="t" data-w="77">20/09/2025</span>
      </div>
    </div>
  </footer>
</div>

<script>
const use = (id, cls, w, h) => `<svg class="${cls || ''}"${w ? ` width="${w}" height="${h || w}"` : ''}><use href="#${id}"/></svg>`;

const bookmarks = [
  ['folder','Full Stack',62,85,115],['folder','IAs',20,211,241],['folder','Repositórios MCP',117,296,326],
  ['google','Google',49,475,502],['wa','WhatsApp Web',103,583,610],['trans','Google Tradutor',109,745,772],
  ['hot','Hotmart - Minhas...',129,912,940],['gmail','Gmail',39,1104,1131],['yt','YouTube',58,1201,1229],
  ['dji','DJI SmartFarm',95,1318,1345],['dji','DJI Agras Manage...',131,1473,1500],['dji','DJI Agras Manage...',131,1664,1692],
  ['folder','Cursos',45,1857,1887],['cube','Home - Full Stack...',127,1964,1991],['dlink','Dronelink',65,2155,2182],['cq','CQBAL 4.0',70,2279,2306]];
let edge = 63;
document.getElementById('bookmarks').innerHTML = bookmarks.map(([ic, name, w, x, tx]) => {
  const iw = ic === 'folder' ? 21 : 20;
  const s = `<a href="#" class="d-flex align-items-center" style="margin-left:${x - edge}px">${use(ic, '', iw, ic === 'folder' ? 17 : 20)}<span class="t" data-w="${w}" style="margin-left:${tx - x - iw}px">${name}</span></a>`;
  edge = tx + w;
  return s;
}).join('');

const menu = [
  ['Principal', 58, [['house','Dashboard',84]]],
  ['Operacional', 82, [['chart','Leitura de Cocho',131],['activity','Análise de Desvios',147,1],['file','Logística de Tratos',143]]],
  ['Insights de IA', 93, [['activity','Alertas & Feedbacks',157],['chart','Otimizações Recomendadas',217]]],
  ['Gestão', 47, [['file','Upload CSV',92],['database','Operações ETL',114],['trend','Dashboard Métricas',155],['file','Relatórios',76],['users','Equipe',53],['gear','Configurações',111]]]];
document.getElementById('menu').innerHTML = menu.map(([g, gw, items]) =>
  `<div class="sidegroup"><div class="sidelabel d-flex align-items-center"><span class="t" data-w="${gw}">${g}</span></div>` +
  items.map(([ic, n, w, on]) => `<a href="#" class="sideitem d-flex align-items-center${on ? ' on' : ''}">${use(ic, 'lu')}<span class="t t14" data-w="${w}">${n}</span></a>`).join('') + '</div>').join('');

/* Icons that carry lettering are drawn in place. */
const lettered = {
  space: '<svg viewBox="0 0 30 30"><path d="M20 4l9-4v17l-5 3M17 8l9-4v18" fill="#e7f3ea" stroke="#4aa565" stroke-width="1.300"/><path d="M0 10 23 6V30L0 26Z" fill="#f3f3f3" stroke="#555" stroke-width="1.400"/><text x="2.500" y="16.500" font-size="6.500" font-weight="700" fill="#444" textLength="18">space</text><text x="5" y="24.500" font-size="6.500" font-weight="700" fill="#3fa85a" textLength="14">desk</text></svg>',
  wild: '<svg viewBox="0 0 30 30"><rect width="30" height="30" fill="url(#gap)"/><path d="M9 5l13 7.500L9 18v-3l4-2.500L9 10Z" fill="#fff"/><path d="M8 12h3" stroke="#fff" stroke-width="2"/><text x="4" y="25" font-size="5.500" font-weight="700" fill="#fff" textLength="22">wildfare</text></svg>'
};
const tasks = 'win search task ubuntu copilot comet:act space beat quad files:run qgis gpt ai term vs:run disc cc fb wild draft pix map poker bird xl:run perp dots:run spot calc arc chrome chrome2 wa:run note:run'.split(' ');
document.getElementById('tasks').innerHTML = tasks.map(t => {
  const [id, st] = t.split(':');
  return `<div class="slot ${st || ''}">${lettered[id] || use('k-' + id)}${id === 'wa' ? '<span class="cnt">1</span>' : ''}</div>`;
}).join('');

/* Track each label so it occupies its nominal width whatever the UI font. */
document.fonts.ready.then(() => document.querySelectorAll('[data-w]').forEach(el => {
  const w = +el.dataset.w, d = w - el.getBoundingClientRect().width;
  el.style.letterSpacing = (d / el.textContent.length).toFixed(3) + 'px';
}));
</script>
</body>
</html>
